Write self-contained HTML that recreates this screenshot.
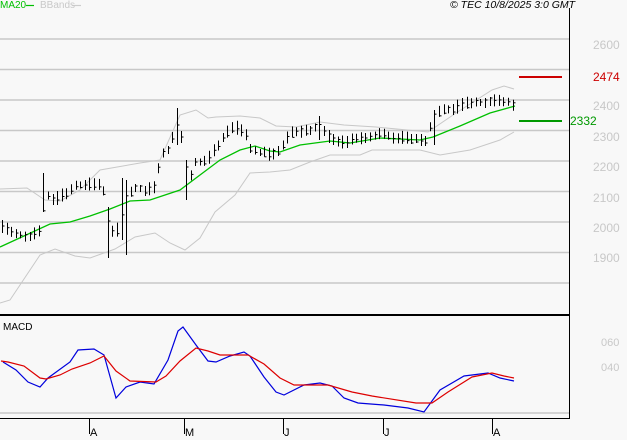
<!DOCTYPE html>
<html><head><meta charset="utf-8"><style>
html,body{margin:0;padding:0;background:#f8f8f8;}
body{width:627px;height:440px;overflow:hidden;position:relative;font-family:"Liberation Sans",sans-serif;}
.t{position:absolute;font-size:11px;white-space:nowrap;}
.ax{color:#c8c8c8;font-size:12px;}
</style></head><body>
<svg id="s" width="627" height="440" style="position:absolute;left:0;top:0" xmlns="http://www.w3.org/2000/svg">
<g stroke="#c8c8c8" stroke-width="1.5">
<line x1="0" y1="39" x2="569" y2="39"/><line x1="0" y1="69.5" x2="569" y2="69.5"/>
<line x1="0" y1="100" x2="569" y2="100"/><line x1="0" y1="130.5" x2="569" y2="130.5"/>
<line x1="0" y1="161" x2="569" y2="161"/><line x1="0" y1="191.5" x2="569" y2="191.5"/>
<line x1="0" y1="222" x2="569" y2="222"/><line x1="0" y1="252.5" x2="569" y2="252.5"/>
<line x1="0" y1="283" x2="569" y2="283"/><line x1="0" y1="413" x2="569" y2="413"/>
</g>
<line x1="569.5" y1="8" x2="569.5" y2="419" stroke="#000"/>
<line x1="0" y1="315" x2="569" y2="315" stroke="#000" stroke-width="2"/>
<line x1="0" y1="418.5" x2="569" y2="418.5" stroke="#000"/>
<g stroke="#000"><line x1="89.5" y1="419" x2="89.5" y2="434"/><line x1="184.5" y1="419" x2="184.5" y2="434"/><line x1="283.5" y1="419" x2="283.5" y2="434"/><line x1="383.5" y1="419" x2="383.5" y2="434"/><line x1="492.5" y1="419" x2="492.5" y2="434"/></g>
<g fill="none" stroke="#c8c8c8" stroke-width="1">
<polyline points="0,189 27,188 45,200 60,201 80,190 100,170 140,163 160,160 180,115 196,110 208,118 216,117 240,116 260,118 276,126 296,127 320,122 344,125 376,127 428,132 456,113 492,90 504,86 514,89"/>
<polyline points="0,303 10,300 40,255 55,249 75,256 90,258 115,249 135,237 155,233 170,243 185,250 200,238 215,212 235,195 250,173 270,172 290,170 310,162 330,155 360,155 372,150 420,150 440,155 470,150 500,140 514,132"/>
</g>
<polyline fill="none" stroke="#00c000" stroke-width="1.3" points="0,247 50,224 70,222 90,216 110,209 130,201 150,200 180,190 200,175 220,160 240,150 255,146 270,151 280,152 300,145 330,141 350,143 380,138 420,140 433,137 460,126 490,113 515,106"/>
<g id="bars" stroke="#000" stroke-width="1"></g>
<line x1="519" y1="77" x2="562" y2="77" stroke="#cc0000" stroke-width="2"/>
<line x1="519" y1="121" x2="562" y2="121" stroke="#009900" stroke-width="2"/>
<line x1="26" y1="5.5" x2="34" y2="5.5" stroke="#00c000" stroke-width="1.2"/>
<line x1="72" y1="5.5" x2="81" y2="5.5" stroke="#ccc" stroke-width="1.2"/>
<polyline fill="none" stroke="#0000dd" stroke-width="1.2" points="3,362 16,370 28,382 40,387 48,378 70,362 78,350 94,349 104,355 116,398 126,387 140,382 154,384 168,360 178,331 183,327 196,345 208,361 216,362 230,356 244,352 250,356 264,377 276,392 284,395 304,385 320,383 332,386 344,398 358,403 384,405 408,408 424,412 440,390 464,376 488,373 500,378 514,381"/>
<polyline fill="none" stroke="#dd0000" stroke-width="1.2" points="1,361 8,362 24,366 40,378 46,379 60,375 72,369 90,363 104,356 116,371 130,381 156,382 166,376 180,361 196,348 208,351 220,355 236,355 248,355 264,364 280,378 294,385 328,385 352,392 372,396 416,403 432,403 448,392 472,377 492,373 504,376 514,378"/>
</svg>
<div class="t" style="left:0;top:0;color:#00c000;font-size:10px">MA20</div>
<div class="t" style="left:40px;top:0;color:#c8c8c8;font-size:10px">BBands</div>
<div class="t" style="left:450px;top:-1px;font-style:italic;color:#000;font-size:10.5px">© TEC 10/8/2025 3:0 GMT</div>
<div class="t ax" style="left:593px;top:38px">2600</div>
<div class="t ax" style="left:593px;top:69px">2500</div>
<div class="t ax" style="left:593px;top:99px">2400</div>
<div class="t ax" style="left:593px;top:130px">2300</div>
<div class="t ax" style="left:593px;top:160px">2200</div>
<div class="t ax" style="left:593px;top:191px">2100</div>
<div class="t ax" style="left:593px;top:221px">2000</div>
<div class="t ax" style="left:593px;top:251px">1900</div>
<div class="t" style="left:593px;top:70px;color:#cc0000;font-size:12px;background:#f8f8f8">2474</div>
<div class="t" style="left:570px;top:114px;color:#009900;font-size:12px">2332</div>
<div class="t ax" style="left:601px;top:337px;font-size:11px">060</div>
<div class="t ax" style="left:601px;top:362px;font-size:11px">040</div>
<div class="t" style="left:3px;top:322px;font-size:10px">MACD</div>
<div class="t" style="left:90px;top:427px;font-size:11px">A</div>
<div class="t" style="left:185px;top:427px;font-size:11px">M</div>
<div class="t" style="left:284px;top:427px;font-size:11px">J</div>
<div class="t" style="left:384px;top:427px;font-size:11px">J</div>
<div class="t" style="left:493px;top:427px;font-size:11px">A</div>
<script>
var P=[[2,228],[15,235],[30,236],[40,232],[45,195],[55,200],[65,195],[75,187],[85,184],[100,186],[105,195],[110,235],[118,230],[125,200],[135,188],[145,190],[155,188],[160,155],[170,150],[175,125],[180,130],[185,165],[190,180],[195,162],[205,163],[215,150],[225,135],[235,128],[245,132],[250,148],[260,153],[270,155],[280,150],[290,135],[300,132],[310,130],[320,125],[325,135],[335,140],[345,145],[355,140],[365,137],[380,135],[395,138],[410,140],[425,140],[433,118],[440,112],[450,110],[465,105],[480,103],[490,101],[500,102],[510,103],[515,106]];
function f(x){for(var i=1;i<P.length;i++)if(x<=P[i][0]){var a=P[i-1],b=P[i];return a[1]+(b[1]-a[1])*(x-a[0])/(b[0]-a[0]);}return P[P.length-1][1];}
var big={45:[173,212],107:[207,258],121:[178,240],126:[180,255],175:[108,145],188:[160,200],320:[116,140],433:[110,145]};
var g=document.getElementById('bars'),h='';
for(var x=2;x<=515;x+=4.6){var xi=Math.round(x),c=f(xi),hi=c-4-((xi*7)%5),lo=c+3+((xi*3)%4);
for(var k in big){if(Math.abs(k-xi)<3){hi=big[k][0];lo=big[k][1];}}
var cl=c+((xi*11)%7)-3;
h+='<line x1="'+(xi+.5)+'" y1="'+hi+'" x2="'+(xi+.5)+'" y2="'+lo+'"/><line x1="'+(xi+.5)+'" y1="'+cl+'" x2="'+(xi+2.5)+'" y2="'+cl+'"/>';}
g.innerHTML=h;
</script>
</body></html>
